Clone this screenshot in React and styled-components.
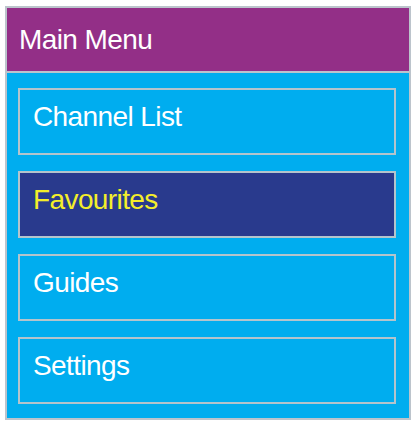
import React from 'react';
import styled, { createGlobalStyle } from 'styled-components';

const GlobalStyle = createGlobalStyle`
  body {
    margin: 0;
    background: #ffffff;
    font-family: "Liberation Sans", Arial, sans-serif;
  }
`;

const MenuPanel = styled.div`
  margin: 6px 0 0 5px;
  width: 402px;
  border: 2px solid #bcc4cc;
  background: #00adef;
  display: flex;
  flex-direction: column;
`;

const MenuHeader = styled.div`
  height: 63px;
  background: #932f87;
  border-bottom: 2px solid #bcc4cc;
  display: flex;
  align-items: center;
  padding-left: 12px;
  color: #ffffff;
  font-size: 28px;
  letter-spacing: -0.6px;
`;

const MenuList = styled.div`
  display: flex;
  flex-direction: column;
  gap: 16px;
  padding: 15px 13px 14px 11px;
`;

const MenuItem = styled.div`
  height: 67px;
  box-sizing: border-box;
  border: 2px solid #b4c4cc;
  background: ${(p) => (p.$active ? '#293a8d' : '#00adef')};
  color: ${(p) => (p.$active ? '#f4ee2a' : '#ffffff')};
  display: flex;
  align-items: center;
  padding: 0 13px 9px;
  font-size: 28px;
  letter-spacing: -0.6px;
`;

const items = ['Channel List', 'Favourites', 'Guides', 'Settings'];

export default function App() {
  return (
    <>
      <GlobalStyle />
      <MenuPanel>
        <MenuHeader>Main Menu</MenuHeader>
        <MenuList>
          {items.map((item) => (
            <MenuItem key={item} $active={item === 'Favourites'}>
              {item}
            </MenuItem>
          ))}
        </MenuList>
      </MenuPanel>
    </>
  );
}
